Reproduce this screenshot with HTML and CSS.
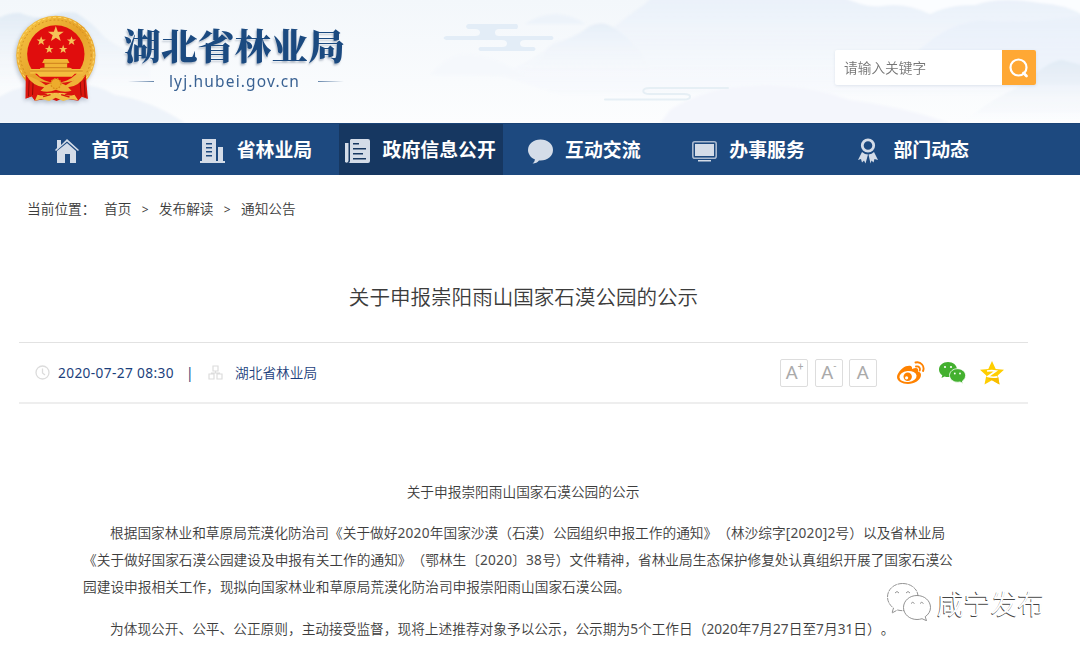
FILE: index.html
```html
<!DOCTYPE html>
<html lang="zh-CN">
<head>
<meta charset="utf-8">
<title>关于申报崇阳雨山国家石漠公园的公示</title>
<link rel="stylesheet" href="styles.css">
</head>
<body>
<header class="header">
  <svg class="scenery" viewBox="0 0 1080 123" preserveAspectRatio="none" aria-hidden="true">
    <defs>
      <linearGradient id="sky" x1="0" y1="0" x2="0" y2="1"><stop offset="0" stop-color="#f3f7fb"/><stop offset="1" stop-color="#fcfdfe"/></linearGradient>
      <linearGradient id="hill" x1="0" y1="0" x2="0" y2="1"><stop offset="0" stop-color="#e1ebf5"/><stop offset="1" stop-color="#f3f6fb" stop-opacity="0"/></linearGradient>
      <linearGradient id="far" x1="0" y1="0" x2="0" y2="1"><stop offset="0" stop-color="#e9f0f9"/><stop offset="1" stop-color="#f6f8fd" stop-opacity=".3"/></linearGradient>
      <filter id="soft"><feGaussianBlur stdDeviation="1.2"/></filter>
    </defs>
    <rect width="1080" height="123" fill="url(#sky)"/>
    <g filter="url(#soft)">
      <path d="M-5 20Q8 12 20 13Q32 18 45 18Q60 10 76 13Q92 22 105 38Q125 52 150 58V90H-5Z" fill="url(#hill)"/>
      <path d="M-5 100Q20 82 55 86Q90 80 115 95Q150 100 185 123H-5Z" fill="#e8f0f8" opacity=".7"/>
      <path d="M500 75Q535 60 555 42Q575 38 590 26Q602 20 613 28Q630 14 645 4L655-5H1085V95H560Z" fill="url(#far)"/>
      <path d="M520 70Q538 66 550 46Q575 38 590 26Q603 20 614 28Q640 44 650 70Z" fill="url(#hill)" opacity=".6"/>
      <path d="M525 24Q540 14 556 14Q573 15 585 24Z" fill="#edf3fa"/>
      <path d="M840-4Q865 8 882 6Q905 2 930 14Q950 4 975 5Q1000-4 1040 3Q1065 4 1085 16V-5Z" fill="#fbfdff"/>
      <path d="M910 60Q940 25 980 20Q1020 24 1085 16V85H890Z" fill="#e7eff9" opacity=".55"/>
      <path d="M960 123Q1000 94 1025 84Q1045 62 1062 60L1085 66V123Z" fill="url(#hill)"/>
      <path d="M430 75Q450 52 470 54Q500 58 525 76Z" fill="#f5f8fc"/>
      <path d="M670 110Q690 96 725 88Q790 78 850 100Q900 106 950 123H660Z" fill="#f4f6fc"/>
    </g>
    <path fill="#e3edf7" d="M468 24H517Q519 26.500 517 29H499Q495 29 495 32.500T499 36H552Q555 38 552 40H525Q520 40 520 43.500T525 47H534Q537 49 534 51H480Q477 49 480 47H502Q507 47 507 43.500T502 40H446Q441 38 446 36H475Q480 36 480 32.500T475 29H468Q464 26.500 468 24Z"/>
    <path fill="none" stroke="#e6eff5" stroke-width="2" stroke-linecap="round" d="M605 99.500H684C692 99.500 692 94 684 94H650C641 94 641 88 650 88H728"/>
  </svg>
  <div class="brand">
    <svg class="emblem" viewBox="40 40 260 270" aria-hidden="true">
      <defs>
        <linearGradient id="gold" x1="0" y1="0" x2="1" y2="1"><stop offset="0" stop-color="#f8c947"/><stop offset=".5" stop-color="#e6a128"/><stop offset="1" stop-color="#f4c14a"/></linearGradient>
        <path id="star" d="M0-10 2.400-3.200 9.500-3.100 3.800 1.200 5.900 8.100 0 4 -5.900 8.100 -3.800 1.200 -9.500-3.100 -2.400-3.200Z"/>
      </defs>
      <path d="M88 225L78 296 96 290 105 303 150 296 170 304 190 296 235 303 245 290 263 296 252 225Z" fill="#d8150c"/>
      <circle cx="168" cy="167" r="119" fill="url(#gold)"/>
      <circle cx="168" cy="167" r="106" fill="none" stroke="#d08c1e" stroke-width="3" stroke-dasharray="5 7"/>
      <circle cx="168" cy="167" r="114" fill="none" stroke="#ffdc76" stroke-width="3" stroke-dasharray="9 7"/>
      <circle cx="168" cy="163" r="86" fill="#e00d0d"/>
      <path d="M78 226Q110 250 168 250T258 226L264 298 246 291 236 302 222 282Q170 276 118 282L105 302 96 290 77 297Z" fill="#dc160e"/>
      <path d="M88 242 86 290M100 246 98 286M241 246 244 288M253 240 256 292" stroke="#960b05" stroke-width="3"/>
      <path d="M91 208H250V222H225L216 231H120L111 222H91Z" fill="#f4bd3e"/>
      <path d="M133 178H203L209 190H202V205H215V211H121V205H134V190H127Z" fill="#f1b536"/>
      <path d="M132 191H205M126 204H211M91 214H249" stroke="#bd6712" stroke-width="2"/>
      <g fill="#f5c258"><use href="#star" transform="translate(168 104) scale(2.500)"/><use href="#star" transform="translate(124 124) scale(1.450)"/><use href="#star" transform="translate(215 124) scale(1.450)"/><use href="#star" transform="translate(148 149) scale(1.350)"/><use href="#star" transform="translate(190 149) scale(1.350)"/></g>
      <path d="M80 228Q112 236 138 257Q168 238 198 257Q226 236 256 228Q240 258 205 263L215 273Q193 281 168 270Q145 281 122 273L133 263Q98 258 80 228Z" fill="#efb237"/>
      <circle cx="168" cy="252" r="15" fill="#edac2c" stroke="#d98b19" stroke-width="4" stroke-dasharray="5 4"/>
      <path d="M105 303 113 285Q139 292 146 280 155 286 168 280 181 286 190 280 199 292 224 285L235 302 210 298 190 304 168 294 148 304 125 298Z" fill="#f2bf46"/>
      <path d="M130 291 152 285M184 285 209 292" stroke="#d8150c" stroke-width="4"/>
    </svg>
    <div class="names">
      <div class="agency">湖北省林业局</div>
      <div class="domain"><span>lyj.hubei.gov.cn</span></div>
    </div>
  </div>
  <div class="search">
    <span class="keyword">请输入关键字</span>
    <span class="go"><svg width="20" height="20" viewBox="0 0 20 20" fill="none" stroke="#fff" stroke-width="2.200"><circle cx="9.500" cy="9.500" r="8"/><path d="m14.500 15 3 3" stroke-width="2.800" stroke-linecap="round"/></svg></span>
  </div>
</header>
<nav class="nav">
  <a><svg viewBox="0 0 25 26"><path d="M3 2h4v5l6-6 12 11-1 1L13 3.500 2 13l-1-1 2-2z"/><path d="m13 5 9 8v12h-6v-9h-5v9H3V13z"/></svg>首页</a>
  <a><svg viewBox="0 0 25 26"><path fill-rule="evenodd" d="M2 1h14v22h2V9h5v14h2v2H0v-2h2zM6 5v1.500h6V5zM6 9v1.500h6V9zM6 13v1.500h6V13zM6 17v1.500h6V17z"/></svg>省林业局</a>
  <a class="on"><svg viewBox="0 0 25 26"><path fill-rule="evenodd" d="M6 1h17q2 0 2 2v20q0 2-2 2H3q2 0 2-2V2zM8 5v1.500h6V5zM8 10v1.500h13V10zM8 15v1.500h10V15zM8 20v1.500h13V20z"/><path d="M0 5h3.500v18q-1 3-3.500 1z"/></svg>政府信息公开</a>
  <a><svg viewBox="0 0 25 26"><path d="M12.500 1.500C5.500 1.500 0 6 0 12c0 4 3 8 7 9.500q-.5 3-2.500 4Q9 25.500 11 22.500h1.500C19.500 22.500 25 18 25 12S19.500 1.500 12.500 1.500z"/></svg>互动交流</a>
  <a><svg viewBox="0 0 25 26"><rect x=".8" y="3.800" width="23.400" height="16.400" rx="2" fill="none" stroke="#a9b9cf" stroke-width="1.600"/><path d="M3 6h19v12H3zM6 22h13v1.500H6z"/></svg>办事服务</a>
  <a><svg viewBox="0 0 25 26"><circle cx="12" cy="7.500" r="5.700" fill="none" stroke="#d4dce8" stroke-width="2.800"/><path d="M6 14q3 2.500 6 2.500l-2.500 9-1.500-3-2 2-1-3.500-3 1zM18 14q-2 2-5.500 2.500l2 9 1-3 2 2 1-3.500 3.500 1z"/></svg>部门动态</a>
</nav>
<div class="crumbs"><span class="where">当前位置：</span><span>首页</span><i>&gt;</i><span>发布解读</span><i>&gt;</i><span>通知公告</span></div>
<main class="article">
  <h1>关于申报崇阳雨山国家石漠公园的公示</h1>
  <div class="meta">
    <svg class="clock" width="15" height="15" viewBox="0 0 15 15" fill="none" stroke="#dcdcdc" stroke-width="1.300"><circle cx="7.500" cy="7.500" r="6.500"/><path d="M7.500 3.500V8L10 10"/></svg>
    <span class="date">2020-07-27 08:30</span><span class="bar">|</span>
    <svg class="org" width="15" height="15" viewBox="0 0 15 15" fill="none" stroke="#dcdcdc" stroke-width="1.200"><path d="M5 1h5v5H5zM1 9h5v5H1zM9 9h5v5H9zM7.500 6v2M3.500 9V8h8v1"/></svg>
    <span class="source">湖北省林业局</span>
    <div class="tools">
      <span class="size">A<sup>+</sup></span><span class="size">A<sup>-</sup></span><span class="size">A</span>
      <svg class="share" width="28" height="24" viewBox="0 0 28 24"><path fill="#ff8200" d="M11 5C8 4 0 11 0 16c0 4 5 7 11 7s13-4 13-9c0-2-1-3-3-3.500.8-3-1-4.500-6-2.500C15.500 5.500 14 4 11 5z"/><ellipse cx="11" cy="15.500" rx="8.600" ry="5.500" fill="#fff" transform="rotate(-6 11 15.500)"/><circle cx="10.700" cy="15.800" r="4.200" fill="#ff8200"/><circle cx="9.600" cy="16.800" r="1.600" fill="#fff"/><path d="M18.500 1.500c5.500-1.500 9.500 4 7.500 8.500M19 5.500c3-.7 4.500 1.500 3.700 4" fill="none" stroke="#ff8200" stroke-width="1.900" stroke-linecap="round"/></svg>
      <svg class="share" width="27" height="22" viewBox="0 0 27 22"><path fill="#43b02f" d="M9 0C4 0 0 3.300 0 7.500c0 2.500 1.300 4.500 3.300 5.800L2.500 16l3-1.500q2 .6 4 .5C18 15 18 12 18 7.500S14 0 9 0z"/><path fill="#43b02f" stroke="#fff" stroke-width=".8" d="M18.500 6.700c-4.500 0-8 3-8 6.700s3.500 6.800 8 6.800q1.500 0 2.500-.3l3 1.500-.6-2.300c2-1.300 3.200-3.400 3.200-5.700 0-3.700-3.600-6.700-8.100-6.700z"/><g fill="#fff"><circle cx="6" cy="5" r="1.100"/><circle cx="12" cy="5" r="1.100"/><circle cx="15.800" cy="11.500" r=".9"/><circle cx="21" cy="11.500" r=".9"/></g></svg>
      <svg class="share" width="24" height="24" viewBox="0 0 24 24"><path fill="#ffce00" d="m12 0 3.700 8L24 8.800l-6.300 5.800L19.500 23.500 12 19.200 4.500 23.500l1.800-8.900L0 8.800 8.300 8z"/><path d="m15 16.500 3.300-.5 1.200 7.500-7.500-4.300q-3-.5-4-2z" fill="#f8bd00"/><path d="M7 10q5-.8 9 0l-8 5.500q5 1.300 9.500.3" fill="none" stroke="#fff" stroke-width="1.700"/></svg>
    </div>
  </div>
  <section class="body">
    <p class="center">关于申报崇阳雨山国家石漠公园的公示</p>
    <p><span class="line first">根据国家林业和草原局荒漠化防治司《关于做好<b>2020</b>年国家沙漠（石漠）公园组织申报工作的通知》（林沙综字<b>[2020]2</b>号）以及省林业局</span><span class="line">《关于做好国家石漠公园建设及申报有关工作的通知》（鄂林生〔<b>2020</b>〕<b>38</b>号）文件精神，省林业局生态保护修复处认真组织开展了国家石漠公</span><span class="line">园建设申报相关工作，现拟向国家林业和草原局荒漠化防治司申报崇阳雨山国家石漠公园。</span></p>
    <p><span class="line first dates">为体现公开、公平、公正原则，主动接受监督，现将上述推荐对象予以公示，公示期为<b>5</b>个工作日（<b>2020</b>年<b>7</b>月<b>27</b>日至<b>7</b>月<b>31</b>日）。</span></p>
  </section>
</main>
<div class="watermark">
  <svg width="44" height="38" viewBox="0 0 44 38" fill="#fff" stroke="#777" stroke-width=".8"><path stroke-dasharray="5 .8" d="M15.500.5C7 .5.500 6.500.500 14c0 4.500 2.500 8.500 6 11l-1.500 5 5.500-3q4 1 7 .5C27 27 31 21 31 13.500S24 .5 15.500.5z"/><path d="M30 12.500c-7.500 0-13.500 5.300-13.500 12s6 12 13.500 12q2.500 0 5-.8l4.500 2-1.300-4c3.300-2.200 5.300-5.500 5.300-9.200 0-6.700-6-12-13.500-12z"/><path fill="none" d="M8 10q2-3 4 0M19 10q2-3 4 0M24 20.500q1.700-2.500 3.500 0M33 20.500q1.700-2.500 3.500 0"/></svg>
  <span>咸宁发布</span>
</div>
</body>
</html>
```
FILE: styles.css
```css
* { box-sizing: border-box; }
body { margin: 0; width: 1080px; height: 653px; overflow: hidden; position: relative; background: #fff; color: #3c3c3c; font: 350 13.7px/27.4px "Noto Sans", "Noto Sans CJK SC", sans-serif; text-spacing-trim: space-all; }
.header { height: 123px; position: relative; display: flex; justify-content: space-between; align-items: flex-start; }
.scenery { position: absolute; inset: 0; width: 1080px; height: 123px; }
.brand, .search { position: relative; display: flex; }
.emblem { width: 87px; height: 90px; margin: 13px 0 0 13px; filter: drop-shadow(-1px 2px 2px rgba(60,80,110,.35)); }
.names { margin: 25px 0 0 24px; width: 224px; }
.agency { height: 45px; font: 900 36.8px/40px "Noto Serif CJK SC", "Noto Sans CJK SC", serif; color: #1b4a80; white-space: nowrap; text-shadow: -1px 2px 2px rgba(60,80,110,.35); }
.domain { display: flex; align-items: center; justify-content: center; gap: 18px; font-size: 15.5px; font-weight: 400; line-height: 22px; letter-spacing: 1.15px; color: #3a6293; white-space: nowrap; }
.domain span { margin-left: -3px; }
.domain::before, .domain::after { content: ""; width: 26px; height: 1px; background: linear-gradient(90deg, transparent, #6585aa); }
.domain::after { background: linear-gradient(270deg, transparent, #6585aa); }
.search { margin: 50px 44px 0 0; width: 201px; height: 35px; border-radius: 2px; background: #fff; box-shadow: 0 1px 3px rgba(60,80,120,.12); }
.keyword { flex: 1; padding-left: 9px; line-height: 35px; color: #757575; }
.go { width: 34px; display: grid; place-items: center; background: #ffa834; border-radius: 0 2px 2px 0; }
.nav { height: 51.500px; padding-left: 10.200px; display: grid; grid-template-columns: repeat(6, 164.200px); background: #1d497f; border-top: 1px solid #1a4376; }
.nav a { display: flex; justify-content: center; align-items: center; gap: 12px; padding-top: 2px; color: #fff; font-size: 18.900px; font-weight: 700; white-space: nowrap; }
.nav a:not(.on) { padding-right: 1px; }
.nav svg { width: 25px; height: 26px; fill: #d4dce8; margin-top: 1px; }
.nav .on { background: #163761; }
.crumbs { padding: 20px 27px 0; display: flex; height: 48.500px; }
.crumbs i { font-style: normal; width: 27.400px; text-align: center; font-size: 12px; font-weight: 400; padding-top: 1px; }
.where { width: 77px; }
.article { margin-left: 19px; width: 1009px; }
h1 { margin: 0; height: 119px; padding-top: 59px; text-align: center; font-size: 20.550px; line-height: 30px; font-weight: 350; }
.meta { height: 62px; border-top: 1px solid #e2e2e2; border-bottom: 2px solid #eee; display: flex; align-items: center; padding: 0 24px 0 16px; color: #1c3f7c; white-space: nowrap; }
.date { margin-left: 8px; width: 117px; font-weight: 400; letter-spacing: .37px; }
.bar { width: 33px; padding-left: 11px; font-weight: 400; }
.org { margin-right: 12px; }
.tools { margin-left: auto; display: flex; align-items: center; }
.size { width: 28px; height: 28px; margin-right: 6.200px; border: 1px solid #ddd; border-radius: 2px; display: flex; justify-content: center; font: 19px/26px Roboto, sans-serif; color: #aaa; }
.size sup { font-size: 10px; line-height: 14px; }
.share { margin-left: 14px; }
.body { width: 872px; margin-left: 64px; padding-top: 73.500px; }
.body p { margin: 0 0 13.700px; }
.center { text-align: center; padding-left: 8px; }
.line { display: block; white-space: nowrap; }
.first { padding-left: 27px; }
.line b { font-weight: 400; letter-spacing: .25px; color: #4a4a4a; }
.dates b { letter-spacing: 0; }
.watermark { position: absolute; left: 887px; top: 583px; display: flex; gap: 6px; }
.watermark span { font-size: 26.800px; line-height: 42px; font-weight: 350; color: #fff; text-shadow: -.7px .7px 0 #444; }
```
